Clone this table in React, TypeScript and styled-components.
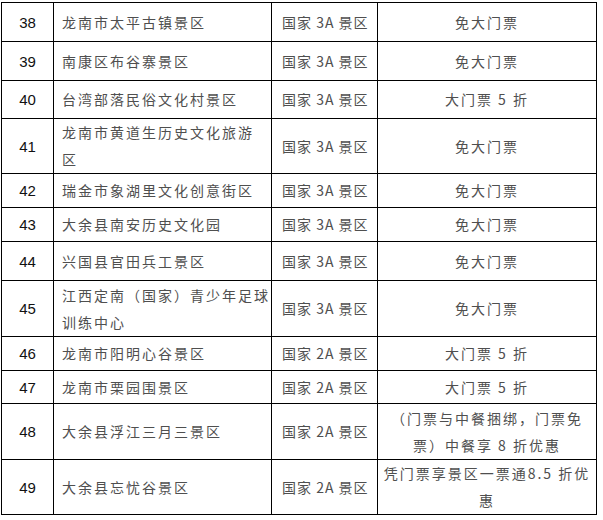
import React from 'react'
import styled, { createGlobalStyle } from 'styled-components'

const GlobalStyle = createGlobalStyle`
  body {
    margin: 0;
    background: #fff;
  }
`

const Table = styled.div`
  margin: 2px 0 0 1px;
  width: 596px;
  box-sizing: border-box;
  border-left: 1px solid #000;
  border-top: 1px solid #000;
`

const Row = styled.div<{ $h: number }>`
  display: grid;
  grid-template-columns: 52px 218px 106px 219px;
  height: ${(p) => p.$h}px;
`

const Cell = styled.div`
  box-sizing: border-box;
  border-right: 1px solid #000;
  border-bottom: 1px solid #000;
  display: flex;
  flex-direction: column;
  justify-content: center;
  font-family: 'Noto Sans CJK SC', sans-serif;
  font-size: 14px;
  line-height: 27px;
  color: #4f4f4f;
  white-space: nowrap;
`

const NumCell = styled(Cell)`
  align-items: center;
  font-family: 'Liberation Sans', Arial, sans-serif;
  font-size: 15px;
  color: #111;
`

const NameCell = styled(Cell)`
  align-items: flex-start;
  padding-left: 8px;
  letter-spacing: 2px;
`

const LevelCell = styled(Cell)`
  align-items: flex-start;
  padding-left: 10px;
  letter-spacing: 1px;
`

const OfferCell = styled(Cell)`
  align-items: center;
  letter-spacing: 2px;
`

type Item = {
  no: number
  name: string[]
  level: string
  offer: string[]
  h: number
}

const items: Item[] = [
  { no: 38, name: ['龙南市太平古镇景区'], level: '3A', offer: ['免大门票'], h: 39 },
  { no: 39, name: ['南康区布谷寨景区'], level: '3A', offer: ['免大门票'], h: 39 },
  { no: 40, name: ['台湾部落民俗文化村景区'], level: '3A', offer: ['大门票 5 折'], h: 38 },
  { no: 41, name: ['龙南市黄道生历史文化旅游', '区'], level: '3A', offer: ['免大门票'], h: 55 },
  { no: 42, name: ['瑞金市象湖里文化创意街区'], level: '3A', offer: ['免大门票'], h: 34 },
  { no: 43, name: ['大余县南安历史文化园'], level: '3A', offer: ['免大门票'], h: 34 },
  { no: 44, name: ['兴国县官田兵工景区'], level: '3A', offer: ['免大门票'], h: 39 },
  { no: 45, name: ['江西定南（国家）青少年足球', '训练中心'], level: '3A', offer: ['免大门票'], h: 56 },
  { no: 46, name: ['龙南市阳明心谷景区'], level: '2A', offer: ['大门票 5 折'], h: 34 },
  { no: 47, name: ['龙南市栗园围景区'], level: '2A', offer: ['大门票 5 折'], h: 33 },
  {
    no: 48,
    name: ['大余县浮江三月三景区'],
    level: '2A',
    offer: ['（门票与中餐捆绑，门票免', '票）中餐享 8 折优惠'],
    h: 56,
  },
  {
    no: 49,
    name: ['大余县忘忧谷景区'],
    level: '2A',
    offer: ['凭门票享景区一票通8.5 折优', '惠'],
    h: 55,
  },
]

export default function App() {
  return (
    <>
      <GlobalStyle />
      <Table>
        {items.map((it) => (
          <Row key={it.no} $h={it.h}>
            <NumCell>{it.no}</NumCell>
            <NameCell>
              {it.name.map((line) => (
                <span key={line}>{line}</span>
              ))}
            </NameCell>
            <LevelCell>国家 {it.level} 景区</LevelCell>
            <OfferCell>
              {it.offer.map((line) => (
                <span key={line}>{line}</span>
              ))}
            </OfferCell>
          </Row>
        ))}
      </Table>
    </>
  )
}
